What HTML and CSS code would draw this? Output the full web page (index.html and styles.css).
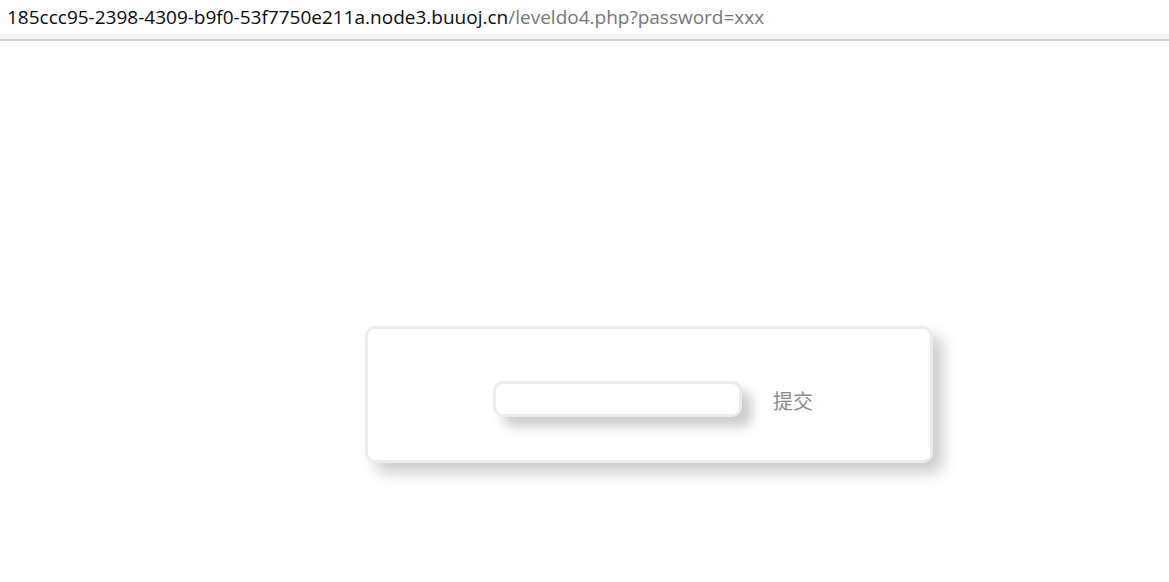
FILE: index.html
```html
<!DOCTYPE html>
<html lang="zh">
<head>
<meta charset="utf-8">
<title>leveldo4</title>
<link rel="stylesheet" href="styles.css">
</head>
<body>
<div class="addr">
  <span class="host">185ccc95-2398-4309-b9f0-53f7750e211a.node3.buuoj.cn</span><span class="path">/leveldo4.php?password=xxx</span>
</div>
<div class="band"></div>
<div class="rule"></div>
<main class="page">
  <form class="card">
    <input class="field" type="text" name="password">
    <button class="submit" type="button">提交</button>
  </form>
</main>
</body>
</html>
```
FILE: styles.css
```css
html, body {
  margin: 0;
  padding: 0;
  background: #ffffff;
}
body {
  font-family: "Open Sans", "Noto Sans", sans-serif;
}
.addr {
  height: 34px;
  display: flex;
  align-items: center;
  padding-left: 7px;
  font-size: 19px;
  white-space: nowrap;
}
.host {
  color: #0a0a0a;
}
.path {
  color: #777777;
}
.band {
  height: 5px;
  background: #f4f4f4;
}
.rule {
  height: 2px;
  background: #d3d3d3;
}
.page {
  padding: 285px 0 80px 365px;
}
.card {
  box-sizing: border-box;
  width: 568px;
  height: 137px;
  border: 3px solid #efebeb;
  border-radius: 10px;
  background: #ffffff;
  box-shadow: 10px 10px 15px rgba(0, 0, 0, 0.2);
  display: flex;
  align-items: flex-start;
  padding: 52px 0 0 125px;
  margin: 0;
}
.field {
  box-sizing: border-box;
  width: 249px;
  height: 36px;
  border: 3px solid #efebeb;
  border-radius: 10px;
  background: #ffffff;
  box-shadow: 10px 10px 12px rgba(0, 0, 0, 0.2);
  outline: none;
  margin: 0;
  padding: 0 10px;
}
.submit {
  margin: 0 0 0 19px;
  height: 40px;
  padding: 0 12px;
  border: none;
  border-radius: 10px;
  background: #ffffff;
  color: #8a8a8a;
  font-family: "Noto Sans CJK SC", sans-serif;
  font-size: 20px;
  line-height: 40px;
}
```
